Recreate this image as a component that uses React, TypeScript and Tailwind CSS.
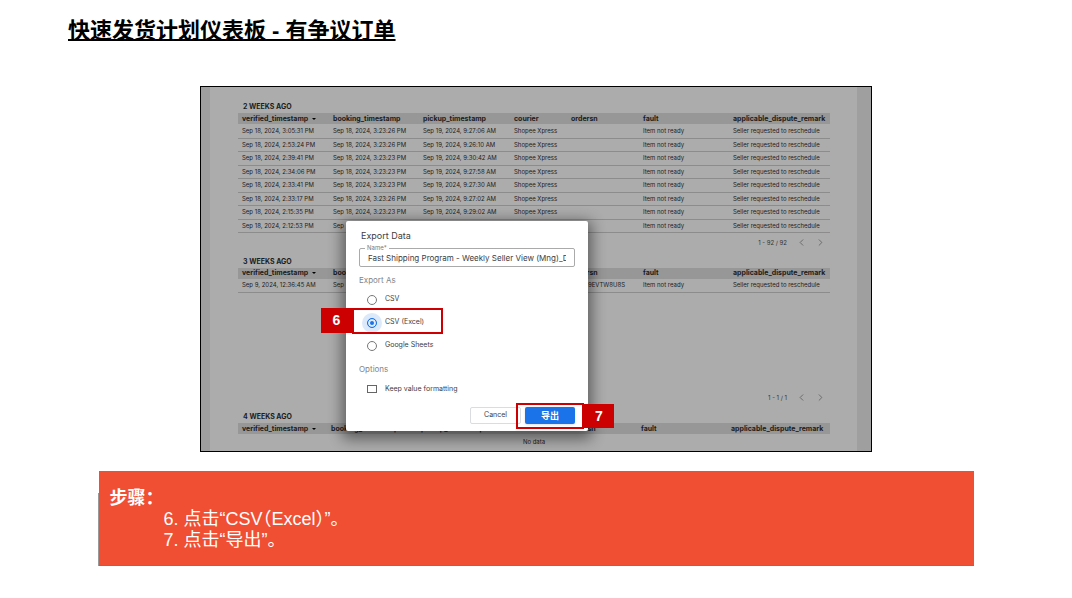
import clsx from "clsx";
import { FiChevronLeft, FiChevronRight } from "react-icons/fi";

const columns = [
  "verified_timestamp",
  "booking_timestamp",
  "pickup_timestamp",
  "courier",
  "ordersn",
  "fault",
  "applicable_dispute_remark",
];

const courier = "Shopee Xpress";
const fault = "Item not ready";
const remark = "Seller requested to reschedule";

const twoWeeks = [
  ["Sep 18, 2024, 3:05:31 PM", "Sep 18, 2024, 3:23:26 PM", "Sep 19, 2024, 9:27:06 AM", courier, "", fault, remark],
  ["Sep 18, 2024, 2:53:24 PM", "Sep 18, 2024, 3:23:26 PM", "Sep 19, 2024, 9:26:10 AM", courier, "", fault, remark],
  ["Sep 18, 2024, 2:39:41 PM", "Sep 18, 2024, 3:23:23 PM", "Sep 19, 2024, 9:30:42 AM", courier, "", fault, remark],
  ["Sep 18, 2024, 2:34:06 PM", "Sep 18, 2024, 3:23:23 PM", "Sep 19, 2024, 9:27:58 AM", courier, "", fault, remark],
  ["Sep 18, 2024, 2:33:41 PM", "Sep 18, 2024, 3:23:23 PM", "Sep 19, 2024, 9:27:30 AM", courier, "", fault, remark],
  ["Sep 18, 2024, 2:33:17 PM", "Sep 18, 2024, 3:23:26 PM", "Sep 19, 2024, 9:27:02 AM", courier, "", fault, remark],
  ["Sep 18, 2024, 2:15:35 PM", "Sep 18, 2024, 3:23:23 PM", "Sep 19, 2024, 9:29:02 AM", courier, "", fault, remark],
  ["Sep 18, 2024, 2:12:53 PM", "Sep", "", "", "", fault, remark],
];

const threeWeeks = [["Sep 9, 2024, 12:36:45 AM", "Sep", "", "", "9EVTW8U8S", fault, remark]];

type TableProps = { title: string; rows: string[][] };

const ReportTable = ({ title, rows }: TableProps) => {
  return (
    <>
      <h2 className="h-3 pl-[5px] text-[7px] leading-[12px] font-bold">{title}</h2>
      <table className="w-full table-fixed text-left whitespace-nowrap">
        <colgroup>
          <col className={rows.length ? "w-[91px]" : "w-[89px]"} />
          <col className="w-[90px]" />
          <col className="w-[91px]" />
          <col className="w-[57px]" />
          <col className="w-[72px]" />
          <col className="w-[90px]" />
          <col />
        </colgroup>
        <thead>
          <tr className="h-[11px] bg-[#979797] text-[7px] leading-[10px]">
            {columns.map((name, i) => (
              <th key={name} className="py-0 pr-0 pl-1 font-bold">
                {name}
                {i === 0 && (
                  <span className="ml-1 inline-block border-x-2 border-t-2 border-x-transparent border-t-black align-middle" />
                )}
              </th>
            ))}
          </tr>
        </thead>
        <tbody>
          {rows.map((row) => (
            <tr key={row[0]} className="border-b border-[#8c8c8c] text-[6px] leading-[10px] odd:h-[14px] even:h-[13px]">
              {row.map((cell, i) => (
                <td key={i} className={clsx("py-0 pl-1", i === 4 ? "pr-3.5 text-right" : "pr-0")}>
                  {cell}
                </td>
              ))}
            </tr>
          ))}
        </tbody>
      </table>
    </>
  );
};

const Pager = ({ text }: { text: string }) => {
  return (
    <div className="flex h-5 items-center justify-end gap-2 pr-1 text-[6px] text-[#333]">
      <span className="pr-px">{text}</span>
      <button aria-label="Previous page" className="text-[#666]">
        <FiChevronLeft size={11} />
      </button>
      <button aria-label="Next page" className="text-[#666]">
        <FiChevronRight size={11} />
      </button>
    </div>
  );
};

const Option = ({ label, checked }: { label: string; checked?: boolean }) => {
  return (
    <label className="flex h-[23px] items-center gap-2 pl-2 text-[7px] text-[#3c4043]">
      <input
        type="radio"
        name="format"
        defaultChecked={checked}
        className="h-[10px] w-[10px] appearance-none rounded-full border border-[#777] checked:border-[#1a73e8] checked:bg-[#1a73e8] checked:shadow-[inset_0_0_0_2px_#e1ecfb,0_0_0_5px_#dce9fb]"
      />
      {label}
    </label>
  );
};

const ExportDialog = () => {
  return (
    <form
      role="dialog"
      aria-label="Export Data"
      className="absolute top-[134px] left-[145px] flex h-[210px] w-[242px] flex-col rounded-xs bg-white px-[13px] pt-[7px] pb-[7px] text-[#3c4043] shadow-[0_4px_14px_4px_rgba(0,0,0,0.45)]"
    >
      <h2 className="pl-0.5 text-[9px] leading-[16px]">Export Data</h2>
      <div className="relative mt-1">
        <label htmlFor="name" className="absolute -top-1 left-1.5 bg-white px-0.5 text-[6px] leading-[8px] text-[#777]">
          Name*
        </label>
        <input
          id="name"
          defaultValue="Fast Shipping Program - Weekly Seller View (Mng)_Data"
          className="block h-[19px] w-full rounded-xs border border-[#aaa] px-2 text-[8px]"
        />
      </div>
      <fieldset className="mt-[7px]">
        <legend className="h-3 text-[8px] leading-[12px] text-[#80868b]">Export As</legend>
        <div className="pt-0.5">
          <Option label="CSV" />
          <Option label="CSV (Excel)" checked />
          <Option label="Google Sheets" />
        </div>
      </fieldset>
      <fieldset className="mt-1.5">
        <legend className="h-3 text-[8px] leading-[12px] text-[#80868b]">Options</legend>
        <label className="flex h-7 items-center gap-2 pl-2 text-[7px]">
          <input type="checkbox" className="h-2 w-[10px] appearance-none border border-[#666]" />
          Keep value formatting
        </label>
      </fieldset>
      <div className="mt-auto flex justify-end gap-1">
        <button type="button" className="h-[17px] w-[51px] rounded-xs border border-[#dadce0] text-[7px]">
          Cancel
        </button>
        <button
          type="button"
          className="h-[17px] w-[50px] rounded-xs bg-[#1a73e8] text-[9px] leading-[17px] font-bold text-white shadow-sm"
        >
          导出
        </button>
      </div>
    </form>
  );
};

const App = () => {
  return (
    <main className="min-h-screen bg-white font-['Liberation_Sans','Noto_Sans_CJK_SC',sans-serif] text-black">
      <h1 className="px-[68px] pt-4 text-[22px] leading-[30px] font-bold underline decoration-2 underline-offset-1 [text-decoration-skip-ink:none]">
        快速发货计划仪表板 - 有争议订单
      </h1>

      <section className="relative mx-auto mt-10 w-full max-w-[672px] border border-black bg-[#acacac] font-[Inter,'Noto_Sans_CJK_SC',sans-serif] text-[#1c1c1c]">
        <div className="border-r-[14px] border-l-[9px] border-[#9f9f9f] pt-3.5 pr-[27px] pl-7">
          <ReportTable title="2 WEEKS AGO" rows={twoWeeks} />
          <Pager text="1 - 92 / 92" />
          <div className="pt-[3px]">
            <ReportTable title="3 WEEKS AGO" rows={threeWeeks} />
          </div>
          <div className="pt-[94px]">
            <Pager text="1 - 1 / 1" />
          </div>
          <div className="pt-1">
            <ReportTable title="4 WEEKS AGO" rows={[]} />
            <p className="h-[17px] text-center text-[6px] leading-[15px]">No data</p>
          </div>
        </div>

        <ExportDialog />

        <div className="absolute top-[221px] left-[120px] flex h-[26px] items-start font-['Liberation_Sans',sans-serif]">
          <span className="h-[25px] w-[31px] bg-[#cc0000] text-center text-[14px] leading-[25px] font-bold text-white">6</span>
          <span className="h-[26px] w-[91px] border-2 border-[#cc0000]" />
        </div>
        <div className="absolute top-[316px] left-[315px] flex h-[26px] items-center font-['Liberation_Sans',sans-serif]">
          <span className="h-[26px] w-[68px] border-2 border-[#cc0000]" />
          <span className="h-6 w-[30px] bg-[#cc0000] text-center text-[14px] leading-[24px] font-bold text-white">7</span>
        </div>
      </section>

      <section className="relative mx-auto mt-[19px] w-full max-w-[875px] border-b border-[#777] bg-[#f04f33] px-[11px] pt-[17px] pb-3.5 text-[18px] leading-[21px] text-white">
        <span className="absolute top-[22px] -bottom-px -left-px w-px bg-[#999]" />
        <h2 className="font-bold">步骤：</h2>
        <ol className="pl-[54px]">
          <li>
            6. 点击“CSV<span className="[font-feature-settings:'halt']">（</span>Excel
            <span className="[font-feature-settings:'halt']">）</span>”。
          </li>
          <li>7. 点击“导出”。</li>
        </ol>
      </section>
    </main>
  );
};

export default App;
